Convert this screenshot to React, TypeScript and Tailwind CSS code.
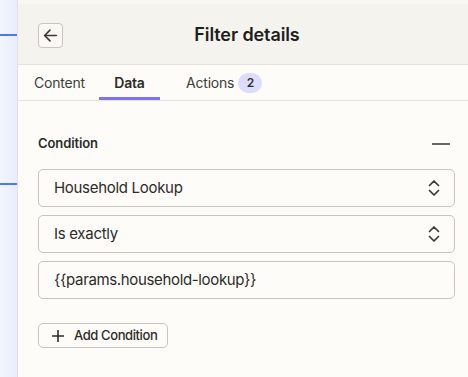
import React from 'react';

const Chevrons: React.FC = () => (
    <svg width="14" height="20" viewBox="0 0 14 20" fill="none" stroke="#3d3a36" strokeWidth="1.7" strokeLinecap="round" strokeLinejoin="round">
        <path d="M2.5 7.5 L7 3 L11.5 7.5" />
        <path d="M2.5 12.5 L7 17 L11.5 12.5" />
    </svg>
);

const SelectBox: React.FC<{ label: string }> = ({ label }) => (
    <div className="h-[38px] flex items-center justify-between pl-[15px] pr-[13px] border border-[#c9c6c0] rounded-[5px] bg-[#fdfcf9]">
        <span className="text-[15px] tracking-[-0.3px] text-[#2d2b28]">{label}</span>
        <Chevrons />
    </div>
);

const App: React.FC = () => {
    return (
        <div className="w-[468px] h-[377px] flex overflow-hidden bg-[#fdfcf9]" style={{ fontFamily: 'Inter, "Noto Sans", sans-serif' }}>
            {/* canvas strip on the left */}
            <div className="w-[18px] shrink-0 bg-gradient-to-r from-[#f2f5fd] to-[#e8edf9] border-r border-[#e3e1dc] flex flex-col">
                <div className="h-[34px]" />
                <div className="h-[2px] bg-[#4a7cf0]" />
                <div className="h-[147px]" />
                <div className="h-[2px] bg-[#4a7cf0]" />
            </div>

            <div className="flex-1 flex flex-col">
                <div className="h-[4px] bg-[#f8f7f3]" />
                <div className="h-[61px] bg-[#f5f3ee] border-b border-[#e6e3dd] flex items-center pl-[20px] relative">
                    <button className="w-[25px] h-[25px] rounded-[4px] border border-[#c9c6c0] bg-[#faf9f6] flex items-center justify-center mt-[2px]">
                        <svg width="17" height="17" viewBox="0 0 16 16" fill="none" stroke="#3d3a36" strokeWidth="1.5" strokeLinecap="round" strokeLinejoin="round">
                            <path d="M13.5 8 H2.5" />
                            <path d="M7.5 3 L2.5 8 L7.5 13" />
                        </svg>
                    </button>
                    <h1 className="absolute left-[8px] right-0 text-center text-[18px] font-semibold tracking-[-0.1px] text-[#201e1b] mt-[1px] pointer-events-none">
                        Filter details
                    </h1>
                </div>

                <div className="h-[36px] border-b border-[#e6e3dd] flex items-stretch text-[14px] tracking-[-0.2px]">
                    <div className="w-[81px] pl-[16px] flex items-center text-[#403d38]">Content</div>
                    <div className="w-[61px] flex items-center justify-center font-semibold text-[#2d2b28] border-b-[3px] border-[#7b74f2] pt-[3px]">Data</div>
                    <div className="pl-[26px] flex items-center gap-[4px] text-[#403d38]">
                        Actions
                        <span className="w-[24px] h-[20px] rounded-full bg-[#dcdcfc] flex items-center justify-center text-[12px] font-semibold text-[#2d2b28]">2</span>
                    </div>
                </div>

                <div className="flex-1 px-[20px] pt-[34px] pr-[13px]">
                    <div className="flex items-center justify-between h-[18px]">
                        <span className="text-[13px] font-semibold tracking-[-0.1px] text-[#2d2b28]">Condition</span>
                        <span className="w-[18px] h-[1.5px] bg-[#6b6862] mr-[5px]" />
                    </div>
                    <div className="mt-[16px] flex flex-col gap-[8px]">
                        <SelectBox label="Household Lookup" />
                        <SelectBox label="Is exactly" />
                        <div className="h-[38px] flex items-center pl-[15px] border border-[#c9c6c0] rounded-[5px] text-[15px] tracking-[-0.35px] text-[#2d2b28]">
                            {'{{params.household-lookup}}'}
                        </div>
                    </div>
                    <button className="mt-[24px] h-[25px] pl-[13px] pr-[10px] flex items-center gap-[10px] border border-[#c9c6c0] rounded-[5px] bg-[#fdfcf9] text-[13px] font-medium tracking-[-0.4px] text-[#2d2b28]">
                        <svg width="12" height="12" viewBox="0 0 12 12" fill="none" stroke="#2d2b28" strokeWidth="1.6" strokeLinecap="round">
                            <path d="M6 0.5 V11.5" />
                            <path d="M0.5 6 H11.5" />
                        </svg>
                        Add Condition
                    </button>
                </div>
            </div>
        </div>
    );
};

export default App;
